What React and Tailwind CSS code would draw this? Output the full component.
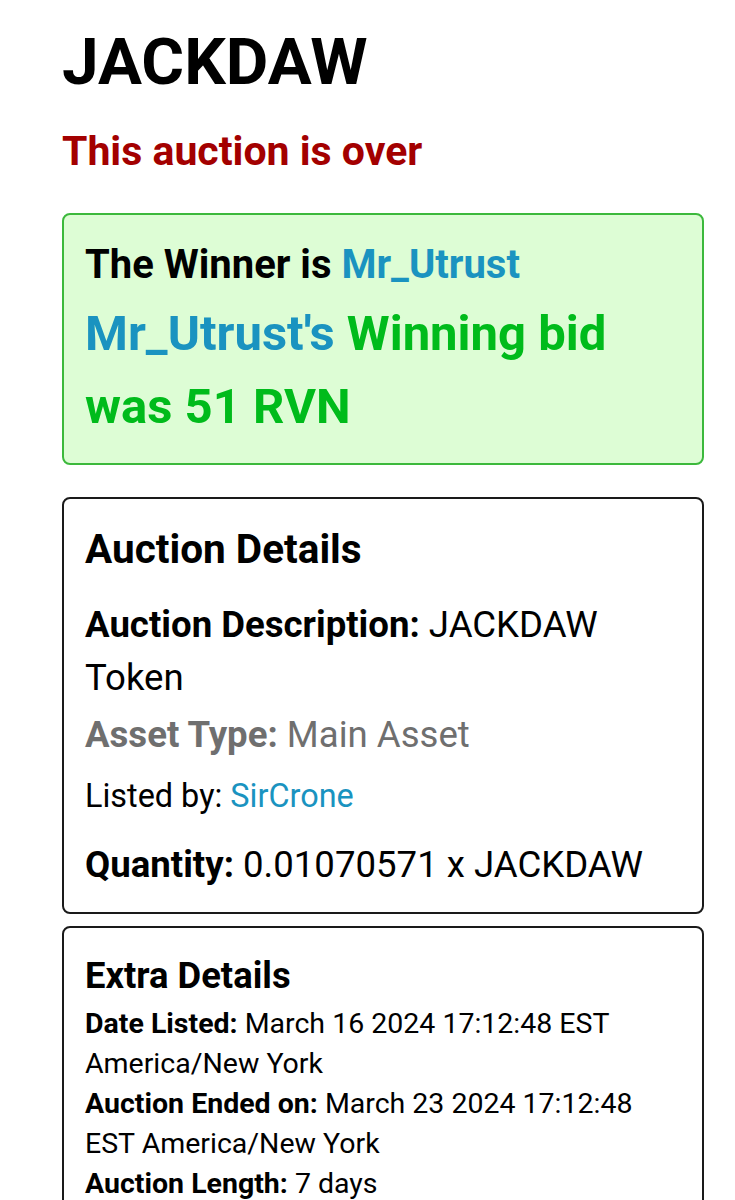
export default function App() {
  return (
    <div className="min-h-[1200px] bg-white pl-[62px] pr-[31px] text-black" style={{ fontFamily: 'Roboto, "Liberation Sans", sans-serif' }}>
      <h1 className="pt-[23px] text-[65.5px] font-bold leading-[77px]">JACKDAW</h1>
      <p className="mt-[27px] text-[41px] font-bold leading-[48px] text-[#a30000]">This auction is over</p>

      {/* Winner box */}
      <div className="mt-[38px] rounded-[8px] border-2 border-[#3cb93c] bg-[#ddfdd5] px-[21px] pt-[23px] pb-[20px]">
        <p className="text-[40px] font-bold leading-[54px]">
          The Winner is <span className="text-[#1a93c0]">Mr_Utrust</span>
        </p>
        <p className="mt-[5px] text-[49px] font-bold leading-[73px] text-[#00bb1b]">
          <span className="text-[#1a93c0]">Mr_Utrust's</span> Winning bid was 51 RVN
        </p>
      </div>

      {/* Auction details */}
      <div className="mt-[32px] rounded-[8px] border-2 border-[#1a1a1a] px-[21px] pt-[26px] pb-[21px]">
        <h2 className="text-[40.5px] font-bold leading-[48px]">Auction Details</h2>
        <p className="mt-[25px] text-[36.6px] leading-[53px]">
          <span className="font-bold">Auction Description:</span> JACKDAW Token
        </p>
        <p className="mt-[4px] text-[36.6px] leading-[53px] text-[#6f6f6f]">
          <span className="font-bold">Asset Type:</span> Main Asset
        </p>
        <p className="mt-[12px] text-[32.4px] leading-[47px]">
          Listed by: <span className="text-[#1a93c0]">SirCrone</span>
        </p>
        <p className="mt-[18px] text-[36.6px] leading-[53px]">
          <span className="font-bold">Quantity:</span> 0.01070571 x JACKDAW
        </p>
      </div>

      {/* Extra details */}
      <div className="mt-[12px] rounded-[8px] border-2 border-[#1a1a1a] px-[21px] pt-[27px] pb-[20px]">
        <h3 className="text-[36.4px] font-bold leading-[42px]">Extra Details</h3>
        <div className="mt-[7px] text-[28.5px] leading-[40px]">
          <p><span className="font-bold">Date Listed:</span> March 16 2024 17:12:48 EST America/New York</p>
          <p><span className="font-bold">Auction Ended on:</span> March 23 2024 17:12:48 EST America/New York</p>
          <p><span className="font-bold">Auction Length:</span> 7 days</p>
        </div>
      </div>
    </div>
  );
}
